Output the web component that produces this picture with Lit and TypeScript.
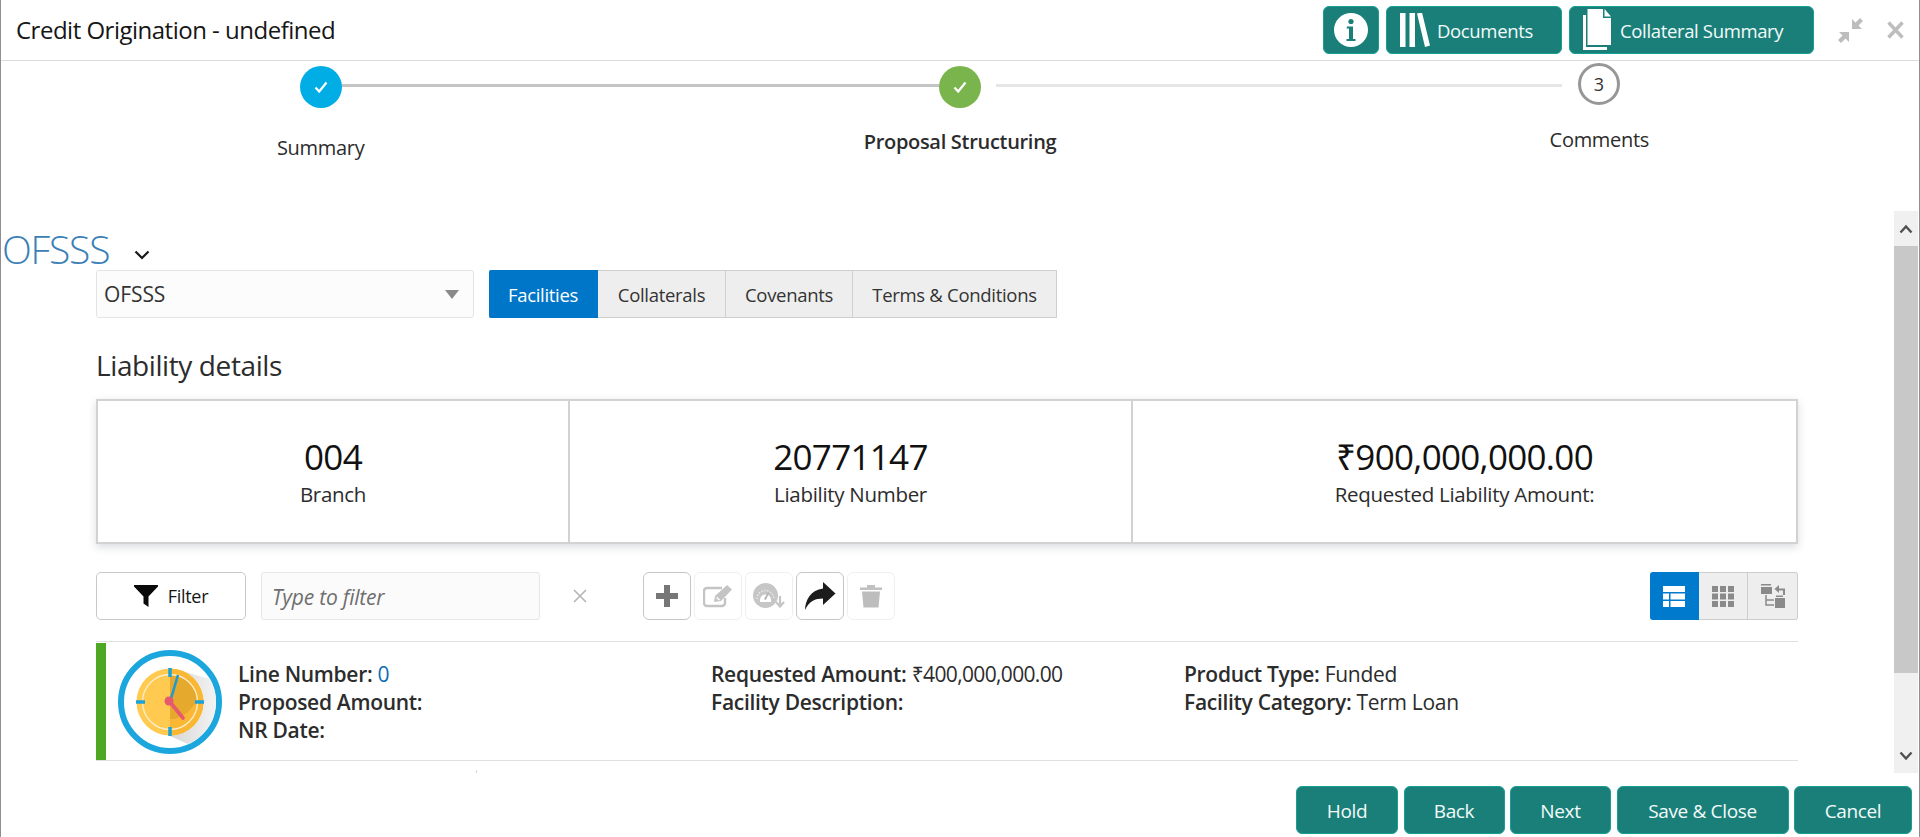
import { LitElement, html, css, svg } from 'lit';
import { customElement } from 'lit/decorators.js';

const check = svg`<path d="M-5.5 0.5 L-1.8 4.5 L5.5 -4.5" fill="none" stroke="#fff" stroke-width="2.2"/>`;

const clock = html`<svg class="clock" viewBox="0 0 110 110" width="110" height="110">
  <defs>
    <linearGradient id="shade" x1="0" y1="0" x2="1" y2="0">
      <stop offset="0" stop-color="#d6d6d6" />
      <stop offset="1" stop-color="#f3f3f3" />
    </linearGradient>
  </defs>
  <circle cx="55" cy="55" r="49" fill="#fff" stroke="#1ba7de" stroke-width="6"/>
  <path d="M63 23 L95 32 A46 46 0 0 1 73 97 L55 89 Z" fill="url(#shade)"/>
  <circle cx="55" cy="55" r="33.5" fill="#ffca4f"/>
  <path d="M55 21.5 A33.5 33.5 0 0 1 55 88.5 Z" fill="#f9b733"/>
  <path d="M55 28 A27 27 0 0 1 82 55 L72 66 L60 72 L55 72 Z" fill="#e5a92e"/>
  <circle cx="55" cy="55" r="27.5" fill="none" stroke="#fbeecb" stroke-width="1.3"/>
  <path d="M55 21 V30 M55 80 V89 M21 55 H30 M80 55 H89" stroke="#1ba2d8" stroke-width="3.5"/>
  <path d="M55 55 L63 28" stroke="#1f9ad0" stroke-width="2.6"/>
  <path d="M55 55 L68 71" stroke="#e6596f" stroke-width="3.6" stroke-linecap="round"/>
  <circle cx="54" cy="54" r="4.5" fill="#e6596f"/>
</svg>`;

@customElement('app-root')
export class AppRoot extends LitElement {
  static styles = css`
    :host {
      display: flex;
      flex-direction: column;
      height: 837px;
      box-sizing: border-box;
      overflow: hidden;
      background: #fff;
      border-left: 1px solid #8f8f8f;
      border-right: 1px solid #8f8f8f;
      font-family: 'Open Sans', 'Noto Sans', sans-serif;
      color: #2c2c2c;
    }
    * {
      box-sizing: border-box;
    }
    svg {
      display: block;
    }
    .header {
      flex: none;
      height: 61px;
      display: flex;
      align-items: flex-start;
      padding: 6px 15px 0 15px;
      border-bottom: 1px solid #dcdcdc;
    }
    .title {
      flex: 1;
      font-size: 24px;
      letter-spacing: -0.5px;
      color: #161616;
      line-height: 48px;
    }
    .teal {
      display: flex;
      align-items: center;
      justify-content: center;
      height: 48px;
      color: #f2fbfa;
      background: #1b7f79;
      border: 1px solid #14a095;
      border-radius: 6px;
      font: inherit;
      font-size: 19px;
      letter-spacing: -0.35px;
      padding: 0;
    }
    .head-btns {
      display: flex;
      gap: 7px;
    }
    .head-btns .teal {
      font-size: 18.5px;
    }
    .info {
      width: 56px;
    }
    .docs {
      width: 176px;
      gap: 7px;
      justify-content: flex-start;
      padding-left: 13px;
    }
    .coll {
      width: 245px;
      gap: 9px;
      justify-content: flex-start;
      padding-left: 13px;
    }
    .win {
      display: flex;
      align-items: center;
      height: 48px;
      margin-left: 24px;
      gap: 24px;
    }
    .stepper {
      flex: none;
      height: 150px;
    }
    .track {
      display: flex;
      align-items: flex-start;
      padding: 5px 0 0 299px;
      height: 55px;
    }
    .circle {
      flex: none;
      width: 42px;
      height: 42px;
      border-radius: 50%;
      display: flex;
      align-items: center;
      justify-content: center;
    }
    .c1 {
      background: #00ade4;
    }
    .c2 {
      background: #79b54c;
    }
    .c3 {
      margin: -3px 0 0 16px;
      border: 3px solid #979797;
      font-size: 18px;
      color: #333;
    }
    .line {
      height: 3px;
      margin-top: 18px;
    }
    .l1 {
      width: 597px;
      background: #c4c4c4;
    }
    .l2 {
      width: 566px;
      margin-left: 15px;
      background: #e6e6e6;
    }
    .labels {
      display: grid;
      grid-template-columns: repeat(3, 1fr);
      text-align: center;
      font-size: 20px;
      letter-spacing: -0.3px;
      line-height: 26px;
    }
    .lab1 {
      padding-top: 19px;
    }
    .lab2 {
      padding-top: 13px;
      font-weight: 600;
    }
    .lab3 {
      padding-top: 11px;
    }
    .middle {
      flex: none;
      height: 562px;
      display: flex;
    }
    .scroll {
      flex: 1;
      overflow: hidden;
      padding: 0 96px 0 0;
    }
    .scrollbar {
      flex: none;
      width: 24px;
      margin-right: 1px;
      background: #f0f0f0;
      display: flex;
      flex-direction: column;
      align-items: center;
    }
    .arrow {
      flex: none;
      height: 35px;
      display: flex;
      align-items: center;
    }
    .thumb {
      flex: none;
      width: 100%;
      height: 427px;
      background: #c8c8c8;
    }
    .grow {
      flex: 1;
    }
    .brand {
      display: flex;
      align-items: flex-end;
      gap: 25px;
      height: 59px;
      padding-left: 1px;
      font-size: 39px;
      font-weight: 300;
      letter-spacing: -1.2px;
      color: #3b7fb6;
      line-height: 42px;
    }
    .brand svg {
      margin-bottom: 10px;
    }
    .inner {
      padding-left: 95px;
    }
    .top {
      display: flex;
      gap: 15px;
    }
    .select {
      width: 378px;
      height: 48px;
      display: flex;
      align-items: center;
      justify-content: space-between;
      padding: 0 14px 0 7px;
      background: #fcfcfc;
      border: 1px solid #e4e4e4;
      border-radius: 3px;
      font-size: 21px;
      letter-spacing: -0.1px;
      color: #333;
    }
    .caret {
      width: 0;
      height: 0;
      border-left: 7px solid transparent;
      border-right: 7px solid transparent;
      border-top: 9px solid #8a8a8a;
    }
    .tabs {
      display: flex;
    }
    .tab {
      height: 48px;
      display: flex;
      align-items: center;
      justify-content: center;
      font-size: 18.5px;
      letter-spacing: -0.3px;
      background: #eee;
      border: 1px solid #cfcfcf;
      border-left: none;
      color: #333;
    }
    .tab.on {
      background: #0076c9;
      border-color: #0076c9;
      color: #fff;
      border-radius: 2px 0 0 2px;
    }
    h2 {
      margin: 29px 0 0;
      font-size: 28px;
      font-weight: 400;
      line-height: 36px;
      letter-spacing: -0.4px;
      color: #2c2c2c;
    }
    .cards {
      display: grid;
      grid-template-columns: 470px 563px 1fr;
      height: 145px;
      margin-top: 16px;
      border: 2px solid #d2d2d2;
      box-shadow: 0 3px 8px rgba(80, 90, 110, 0.22);
    }
    .card {
      display: flex;
      flex-direction: column;
      align-items: center;
      padding-top: 31px;
      border-left: 2px solid #d2d2d2;
      font-size: 20.5px;
      letter-spacing: -0.3px;
      line-height: 26px;
    }
    .card:first-child {
      border-left: none;
    }
    .val {
      font-size: 35px;
      line-height: 49px;
      letter-spacing: -0.7px;
      color: #111;
    }
    .tools {
      display: flex;
      align-items: center;
      margin-top: 28px;
      height: 48px;
    }
    .filter {
      width: 150px;
      height: 48px;
      display: flex;
      align-items: center;
      justify-content: center;
      gap: 10px;
      border: 1px solid #c9c9c9;
      border-radius: 5px;
      font-size: 18px;
      letter-spacing: -0.3px;
      color: #161616;
    }
    .search {
      width: 279px;
      height: 48px;
      margin-left: 15px;
      display: flex;
      align-items: center;
      padding: 2px 0 0 10px;
      background: #fbfbfb;
      border: 1px solid #e6e6e6;
      border-radius: 3px;
      font-size: 21px;
      font-style: italic;
      letter-spacing: -0.2px;
      color: #6f6f6f;
    }
    .clear {
      margin: 0 56px 0 33px;
      width: 14px;
    }
    .icons {
      display: flex;
      gap: 3px;
    }
    .ib {
      width: 48px;
      height: 48px;
      display: flex;
      align-items: center;
      justify-content: center;
      border: 1px solid #c6c6c6;
      border-radius: 6px;
    }
    .ib.off {
      border-color: #efefef;
    }
    .views {
      margin-left: auto;
      display: flex;
    }
    .vb {
      width: 49px;
      height: 48px;
      display: flex;
      align-items: center;
      justify-content: center;
      background: #eee;
      border: 1px solid #cdcdcd;
      border-left: none;
    }
    .vb:last-child {
      border-radius: 0 3px 3px 0;
      width: 50px;
    }
    .vb.on {
      background: #007acc;
      border-color: #007acc;
      border-radius: 3px 0 0 3px;
    }
    .row {
      display: flex;
      align-items: flex-start;
      height: 120px;
      margin-top: 21px;
      border-top: 1px solid #e0e0e0;
      border-bottom: 1px solid #e0e0e0;
      font-size: 21px;
      letter-spacing: -0.3px;
      line-height: 28px;
    }
    .bar {
      flex: none;
      width: 10px;
      height: 117px;
      margin-top: 1px;
      background: #4fa823;
    }
    .clock {
      flex: none;
      margin: 5px 0 0 9px;
    }
    .col {
      flex: none;
      width: 473px;
      padding-top: 18px;
    }
    .col.c-a {
      margin-left: 13px;
    }
    .col b {
      font-weight: 600;
    }
    .amt {
      letter-spacing: -0.65px;
    }
    .link {
      color: #0a6cb5;
    }
    .next {
      display: flex;
      height: 14px;
      padding-left: 71px;
    }
    .next i {
      display: block;
      width: 53px;
      height: 1px;
      margin-top: 12px;
      background: #dedede;
    }
    .next u {
      display: block;
      width: 1px;
      height: 4px;
      margin: 9px 0 0 256px;
      background: #d4d4d4;
    }
    .footer {
      flex: none;
      height: 64px;
      display: flex;
      justify-content: flex-end;
      gap: 5.5px;
      padding: 13px 7px 0 0;
    }
    .footer .teal {
      padding-top: 2px;
    }
    .f1 {
      width: 102px;
    }
    .f2 {
      width: 101px;
    }
    .f3 {
      width: 101px;
    }
    .f4 {
      width: 172px;
    }
    .f5 {
      width: 118px;
    }
  `;

  render() {
    return html`
      <div class="header">
        <div class="title">Credit Origination - undefined</div>
        <div class="head-btns">
          <button class="teal info">
            <svg width="36" height="36" viewBox="0 0 36 36">
              <circle cx="18" cy="18" r="17" fill="#fff" />
              <circle cx="18" cy="9.5" r="2.600" fill="#1b7f79" />
              <path d="M14 14.500h6v12.500h2.500v2h-9v-2h2.500v-10.500h-2.500z" fill="#1b7f79" />
            </svg>
          </button>
          <button class="teal docs">
            <svg width="30" height="34" viewBox="0 0 30 34">
              <path d="M0 0h5.500v34H0zM9.500 0h5.500v34H9.500zM17 .5l5-1 8 33-5 1.500z" fill="#fff" />
            </svg>
            Documents
          </button>
          <button class="teal coll">
            <svg width="28" height="42" viewBox="0 0 28 42">
              <path d="M0 6h3v32h21v3H0z" fill="#fff" />
              <path d="M4.500 0H20v9h8v27H4.500zM21.500 0l6.500 7.500h-6.500z" fill="#fff" />
            </svg>
            Collateral Summary
          </button>
        </div>
        <div class="win">
          <svg width="25" height="25" viewBox="0 0 25 25">
            <path d="M14 1V11H24L20.500 7.500L25 3L22 0L17.500 4.500ZM11 24V14H1L4.500 17.500L0 22L3 25L7.500 20.500Z" fill="#bdbdbd" />
          </svg>
          <svg width="17" height="18" viewBox="0 0 17 18">
            <path d="M1.500 1.500l14 15M15.500 1.500l-14 15" stroke="#bdbdbd" stroke-width="3.400" />
          </svg>
        </div>
      </div>

      <div class="stepper">
        <div class="track">
          <div class="circle c1"><svg width="16" height="16" viewBox="-8 -8 16 16">${check}</svg></div>
          <div class="line l1"></div>
          <div class="circle c2"><svg width="16" height="16" viewBox="-8 -8 16 16">${check}</svg></div>
          <div class="line l2"></div>
          <div class="circle c3">3</div>
        </div>
        <div class="labels">
          <div class="lab1">Summary</div>
          <div class="lab2">Proposal Structuring</div>
          <div class="lab3">Comments</div>
        </div>
      </div>

      <div class="middle">
        <div class="scroll">
          <div class="brand">
            OFSSS
            <svg width="16" height="10" viewBox="0 0 16 10">
              <path d="M1.500 1.500L8 8l6.500-6.500" fill="none" stroke="#1a1a1a" stroke-width="2.200" />
            </svg>
          </div>
          <div class="inner">
            <div class="top">
              <div class="select">OFSSS<span class="caret"></span></div>
              <div class="tabs">
                <div class="tab on" style="width:109px">Facilities</div>
                <div class="tab" style="width:128px">Collaterals</div>
                <div class="tab" style="width:127px">Covenants</div>
                <div class="tab" style="width:204px">Terms &amp; Conditions</div>
              </div>
            </div>
            <h2>Liability details</h2>
            <div class="cards">
              <div class="card"><span class="val">004</span>Branch</div>
              <div class="card"><span class="val">20771147</span>Liability Number</div>
              <div class="card"><span class="val">₹900,000,000.00</span>Requested Liability Amount:</div>
            </div>
            <div class="tools">
              <div class="filter">
                <svg width="24" height="22" viewBox="0 0 24 22">
                  <path d="M0 0h24v1.500L14.500 11.500V22l-5-3.500v-7L0 1.500z" fill="#0a0a0a" />
                </svg>
                Filter
              </div>
              <div class="search">Type to filter</div>
              <svg class="clear" width="14" height="14" viewBox="0 0 14 14">
                <path d="M1 1l12 12M13 1L1 13" stroke="#b5b5b5" stroke-width="1.600" />
              </svg>
              <div class="icons">
                <div class="ib">
                  <svg width="24" height="24" viewBox="0 0 24 24">
                    <path d="M9 1h6v8h8v6h-8v8H9v-8H1V9h8z" fill="#777" />
                  </svg>
                </div>
                <div class="ib off">
                  <svg width="30" height="24" viewBox="0 0 30 24">
                    <path d="M22 14v5a3 3 0 0 1-3 3H4a3 3 0 0 1-3-3V7a3 3 0 0 1 3-3h15" fill="none" stroke="#c4c4c4" stroke-width="2.400" />
                    <path d="M11 18l1-6L24 1l5 4.500L18 17z" fill="#c4c4c4" />
                    <path d="M13.500 13.500l3 2.500" stroke="#fff" stroke-width="1.500" />
                  </svg>
                </div>
                <div class="ib off">
                  <svg width="32" height="26" viewBox="0 0 32 26">
                    <circle cx="12.500" cy="12.500" r="12.500" fill="#c6c6c6" />
                    <path d="M4 16a8.500 8.500 0 0 1 17 0" fill="none" stroke="#e9e9e9" stroke-width="1.500" stroke-dasharray="1.500 1.500" />
                    <path d="M7 19h11v-2a5.500 5.500 0 0 0-11 0z" fill="#fff" />
                    <path d="M11 16l4-7 1 1-3 7z" fill="#b5b5b5" />
                    <path d="M27 13v10M23 19l4 4.500 4-4.500" fill="none" stroke="#c6c6c6" stroke-width="2.200" />
                  </svg>
                </div>
                <div class="ib">
                  <svg width="32" height="28" viewBox="0 0 32 28">
                    <path d="M19 0l12.500 11.500L19 23v-6.500C11 16.500 5 19 1 28c0-10 6-20 18-21.500z" fill="#1c1c1c" />
                  </svg>
                </div>
                <div class="ib off">
                  <svg width="22" height="24" viewBox="0 0 22 24">
                    <path d="M0 3.500h22V6H0zM7 3.500V1h8v2.500z" fill="#c0c0c0" />
                    <path d="M2 7.500h18l-1.500 16h-15z" fill="#bdbdbd" />
                  </svg>
                </div>
              </div>
              <div class="views">
                <div class="vb on">
                  <svg width="22" height="21" viewBox="0 0 22 21">
                    <path d="M0 0h22v6H0zM0 7.500h6v6H0zM7.500 7.500H22v6H7.500zM0 15h6v6H0zM7.500 15H22v6H7.500z" fill="#fff" />
                  </svg>
                </div>
                <div class="vb">
                  <svg width="22" height="21" viewBox="0 0 22 21">
                    <path d="M0 0h6v6H0zM8 0h6v6H8zM16 0h6v6h-6zM0 7.500h6v6H0zM8 7.500h6v6H8zM16 7.500h6v6h-6zM0 15h6v6H0zM8 15h6v6H8zM16 15h6v6h-6z" fill="#8a8a8a" />
                  </svg>
                </div>
                <div class="vb">
                  <svg width="24" height="24" viewBox="0 0 24 24">
                    <path d="M0 0h10v1.500H0zM0 3h11v7H0zM14 14h10v10H14zM15 11.500h7v1.500h-7z" fill="#8a8a8a" />
                    <path d="M5 11v10h8M5 16h8" fill="none" stroke="#8a8a8a" stroke-width="1.500" />
                    <path d="M18 1l-4.500 4 4.500 4V6.500h4V11h2V4.500h-6z" fill="#8a8a8a" />
                  </svg>
                </div>
              </div>
            </div>
            <div class="row">
              <div class="bar"></div>
              ${clock}
              <div class="col c-a">
                <div><b>Line Number:</b> <span class="link">0</span></div>
                <div><b>Proposed Amount:</b></div>
                <div><b>NR Date:</b></div>
              </div>
              <div class="col">
                <div><b>Requested Amount:</b> <span class="amt">₹400,000,000.00</span></div>
                <div><b>Facility Description:</b></div>
              </div>
              <div class="col">
                <div><b>Product Type:</b> Funded</div>
                <div><b>Facility Category:</b> Term Loan</div>
              </div>
            </div>
            <div class="next"><i></i><u></u></div>
          </div>
        </div>
        <div class="scrollbar">
          <div class="arrow">
            <svg width="14" height="10" viewBox="0 0 14 10"><path d="M1.500 8.500L7 2.500l5.500 6" fill="none" stroke="#505050" stroke-width="2.400" /></svg>
          </div>
          <div class="thumb"></div>
          <div class="grow"></div>
          <div class="arrow">
            <svg width="14" height="10" viewBox="0 0 14 10"><path d="M1.500 1.500L7 7.500l5.500-6" fill="none" stroke="#505050" stroke-width="2.400" /></svg>
          </div>
        </div>
      </div>

      <div class="footer">
        <button class="teal f1">Hold</button>
        <button class="teal f2">Back</button>
        <button class="teal f3">Next</button>
        <button class="teal f4">Save &amp; Close</button>
        <button class="teal f5">Cancel</button>
      </div>
    `;
  }
}
